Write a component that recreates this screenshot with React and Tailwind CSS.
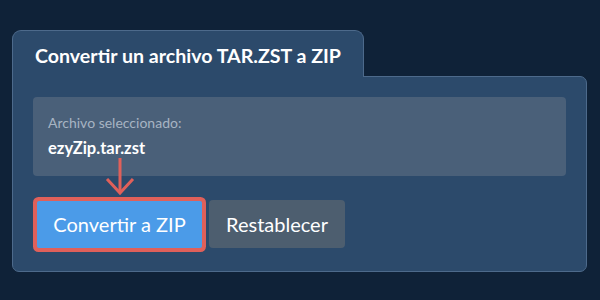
import React from 'react';

const App = () => {
  return (
    <div
      className="w-[600px] h-[300px] bg-[#0f2238] pt-[30px] pl-[12px] pr-[13px] overflow-hidden"
      style={{ fontFamily: 'Lato, "Noto Sans", sans-serif' }}
    >
      {/* tab */}
      <div className="relative z-10 -mb-px w-[352px] h-[47px] bg-[#2c4a6b] border border-b-0 border-[#4d6a8b] rounded-t-[9px] pl-[22px] pt-[12px]">
        <h1 className="text-[19.6px] leading-[25px] font-bold text-white">Convertir un archivo TAR.ZST a ZIP</h1>
      </div>

      {/* panel */}
      <div className="relative bg-[#2c4a6b] border border-[#4d6a8b] rounded-b-[7px] rounded-tr-[7px] pt-[20px] px-[20px] pb-[23px]">
        <div className="bg-[#4a6079] rounded-[4px] h-[79px] pl-[15px] pt-[16px]">
          <p className="text-[14px] leading-[20px] text-[#a7b4c3]">Archivo seleccionado:</p>
          <p className="mt-[3px] text-[16.5px] leading-[24px] font-bold text-white">ezyZip.tar.zst</p>
        </div>

        <div className="flex items-center mt-[24px] pl-[4px] gap-[7px]">
          <button className="h-[47px] w-[165px] bg-[#4b9be8] text-white text-[20px] rounded-[2px] ring-4 ring-[#e0605a]">
            Convertir a ZIP
          </button>
          <button className="h-[48px] w-[136px] bg-[#4d5e6f] text-white text-[20px] rounded-[4px]">
            Restablecer
          </button>
        </div>

        {/* arrow annotation */}
        <svg
          className="absolute left-[92px] top-[81px]"
          width="30"
          height="38"
          viewBox="0 0 30 38"
          fill="none"
          stroke="#e0605a"
          strokeWidth="3"
        >
          <line x1="15" y1="0" x2="15" y2="35" />
          <polyline points="2,21 15,35 28,21" />
        </svg>
      </div>
    </div>
  );
};

export default App;
